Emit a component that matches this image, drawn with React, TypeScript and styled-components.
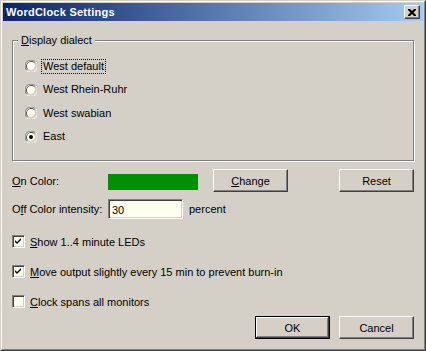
import React from "react"
import styled, { createGlobalStyle } from "styled-components"

const Face = "#d4d0c8"
const Shadow = "#808080"
const DarkShadow = "#404040"
const Field = "#fffff0"

const GlobalStyle = createGlobalStyle`
  html, body {
    margin: 0;
    padding: 0;
    background: ${Face};
  }
  body {
    font-family: "Liberation Sans", Arial, sans-serif;
    font-size: 11px;
    color: #000;
  }
`

const dialects = ["West default", "West Rhein-Ruhr", "West swabian", "East"]

const Radio: React.FC<{ checked?: boolean }> = ({ checked }) => (
  <svg width="12" height="12" viewBox="0 0 12 12">
    <path d="M9.5 2.5 A5 5 0 0 0 2.5 9.5" fill="none" stroke={DarkShadow} />
    <circle cx="6" cy="6" r="4" fill={Field} />
    <path d="M9.5 2.5 A5 5 0 0 1 2.5 9.5" fill="none" stroke={Face} />
    <path d="M10.6 1.4 A6.2 6.2 0 0 1 1.4 10.6" fill="none" stroke="#fff" />
    <path d="M10.3 1.7 A6 6 0 0 0 1.7 10.3" fill="none" stroke={Shadow} />
    {checked && <circle cx="6" cy="6" r="2" fill="#000" />}
  </svg>
)

const Check = () => (
  <svg width="7" height="7" viewBox="0 0 7 7">
    <path d="M0 2 L2 4 L6 0 L6 2 L2 6 L0 4 Z" fill="#000" />
  </svg>
)

export default function App() {
  return (
    <>
      <GlobalStyle />
      <S.Window>
        <S.Frame>
          <S.TitleBar>
            <S.Title>WordClock Settings</S.Title>
            <S.CloseButton aria-label="Close">
              <svg width="8" height="7" viewBox="0 0 8 7">
                <path d="M0 0h2l2 2 2-2h2v1l-2.5 2.5L8 6v1H6L4 5 2 7H0V6l2.5-2.5L0 1z" fill="#000" />
              </svg>
            </S.CloseButton>
          </S.TitleBar>
          <S.Body>
            <S.GroupBox>
              <S.Legend>
                <u>D</u>isplay dialect
              </S.Legend>
              <S.RadioList>
                {dialects.map((d, i) => (
                  <S.Option key={d}>
                    <Radio checked={d === "East"} />
                    <S.OptionLabel focused={i === 0}>{d}</S.OptionLabel>
                  </S.Option>
                ))}
              </S.RadioList>
            </S.GroupBox>

            <S.FormRow top={8} rowHeight={23}>
              <S.Label>
                <u>O</u>n Color:
              </S.Label>
              <S.Swatch />
              <S.Button>
                <u>C</u>hange
              </S.Button>
              <S.Spacer />
              <S.Button>Reset</S.Button>
            </S.FormRow>

            <S.FormRow top={7} rowHeight={20}>
              <S.Label>
                O<u>f</u>f Color intensity:
              </S.Label>
              <S.TextField defaultValue="30" />
              <S.Unit>percent</S.Unit>
            </S.FormRow>

            <S.CheckList>
              <S.CheckRow>
                <S.CheckBox>
                  <Check />
                </S.CheckBox>
                <span>
                  <u>S</u>how 1..4 minute LEDs
                </span>
              </S.CheckRow>
              <S.CheckRow>
                <S.CheckBox>
                  <Check />
                </S.CheckBox>
                <span>
                  <u>M</u>ove output slightly every 15 min to prevent burn-in
                </span>
              </S.CheckRow>
              <S.CheckRow>
                <S.CheckBox />
                <span>
                  <u>C</u>lock spans all monitors
                </span>
              </S.CheckRow>
            </S.CheckList>

            <S.Footer>
              <S.Button isDefault>OK</S.Button>
              <S.Button>Cancel</S.Button>
            </S.Footer>
          </S.Body>
        </S.Frame>
      </S.Window>
    </>
  )
}

const S = {
  Window: styled.div`
    width: 426px;
    height: 351px;
    box-sizing: border-box;
    border: 1px solid;
    border-color: ${Face} ${DarkShadow} ${DarkShadow} ${Face};
    background: ${Face};
  `,
  Frame: styled.div`
    height: 100%;
    box-sizing: border-box;
    border: 1px solid;
    border-color: #fff ${Shadow} ${Shadow} #fff;
    padding: 1px;
    display: flex;
    flex-direction: column;
  `,
  TitleBar: styled.div`
    height: 18px;
    display: flex;
    align-items: center;
    padding: 0 3px 0 3px;
    background: linear-gradient(to right, #0a246a, #a6caf0);
  `,
  Title: styled.div`
    flex: 1;
    color: #fff;
    font-weight: bold;
    font-size: 11px;
    letter-spacing: 0.25px;
  `,
  CloseButton: styled.div`
    width: 16px;
    height: 14px;
    box-sizing: border-box;
    display: flex;
    align-items: center;
    justify-content: center;
    background: ${Face};
    border: 1px solid;
    border-color: #fff ${DarkShadow} ${DarkShadow} #fff;
    box-shadow: inset -1px -1px ${Shadow};
  `,
  Body: styled.div`
    flex: 1;
    display: flex;
    flex-direction: column;
    padding: 0 9px;
  `,
  GroupBox: styled.div`
    position: relative;
    margin-top: 19px;
    height: 121px;
    box-sizing: border-box;
    border: 1px solid ${Shadow};
    box-shadow: 1px 1px 0 #fff, inset 1px 1px 0 #fff;
    padding: 17px 12px 0 12px;
  `,
  Legend: styled.div`
    position: absolute;
    top: -8px;
    left: 5px;
    padding: 0 3px;
    background: ${Face};
    line-height: 14px;
  `,
  RadioList: styled.div`
    display: grid;
    grid-auto-rows: 16px;
    row-gap: 7.5px;
  `,
  Option: styled.div`
    display: flex;
    align-items: center;
  `,
  OptionLabel: styled.span<{ focused?: boolean }>`
    margin-left: 4px;
    padding: 0 1px;
    line-height: 13px;
    border: 1px dotted ${({ focused }) => (focused ? "#000" : "transparent")};
  `,
  FormRow: styled.div<{ top: number; rowHeight: number }>`
    display: flex;
    align-items: center;
    margin-top: ${({ top }) => top}px;
    height: ${({ rowHeight }) => rowHeight}px;
  `,
  Label: styled.div`
    width: 96px;
  `,
  Swatch: styled.div`
    width: 90px;
    height: 16px;
    margin-top: 2px;
    background: #009000;
    margin-right: 15px;
  `,
  Spacer: styled.div`
    flex: 1;
  `,
  Button: styled.div<{ isDefault?: boolean }>`
    width: 75px;
    height: 23px;
    box-sizing: border-box;
    display: flex;
    align-items: center;
    justify-content: center;
    background: ${Face};
    border: 1px solid;
    border-color: ${({ isDefault }) => (isDefault ? "#000" : `#fff ${DarkShadow} ${DarkShadow} #fff`)};
    box-shadow: ${({ isDefault }) =>
      isDefault
        ? `inset -1px -1px ${DarkShadow}, inset 1px 1px #fff, inset -2px -2px ${Shadow}`
        : `inset -1px -1px ${Shadow}`};
  `,
  TextField: styled.input`
    width: 75px;
    height: 20px;
    box-sizing: border-box;
    margin: 0;
    padding: 1px 3px 0;
    font: inherit;
    color: #000;
    background: ${Field};
    border: 1px solid;
    border-color: ${Shadow} #fff #fff ${Shadow};
    box-shadow: inset 1px 1px ${DarkShadow}, inset -1px -1px ${Face};
    outline: none;
  `,
  Unit: styled.span`
    margin-left: 6px;
  `,
  CheckList: styled.div`
    display: flex;
    flex-direction: column;
    gap: 17px;
    margin-top: 16px;
  `,
  CheckRow: styled.div`
    display: flex;
    align-items: center;
    gap: 5px;
    height: 13px;
  `,
  CheckBox: styled.div`
    width: 13px;
    height: 13px;
    box-sizing: border-box;
    display: flex;
    align-items: center;
    justify-content: center;
    background: ${Field};
    border: 1px solid;
    border-color: ${Shadow} #fff #fff ${Shadow};
    box-shadow: inset 1px 1px ${DarkShadow}, inset -1px -1px ${Face};
  `,
  Footer: styled.div`
    display: flex;
    justify-content: flex-end;
    gap: 9px;
    margin-top: 8px;
  `,
}
